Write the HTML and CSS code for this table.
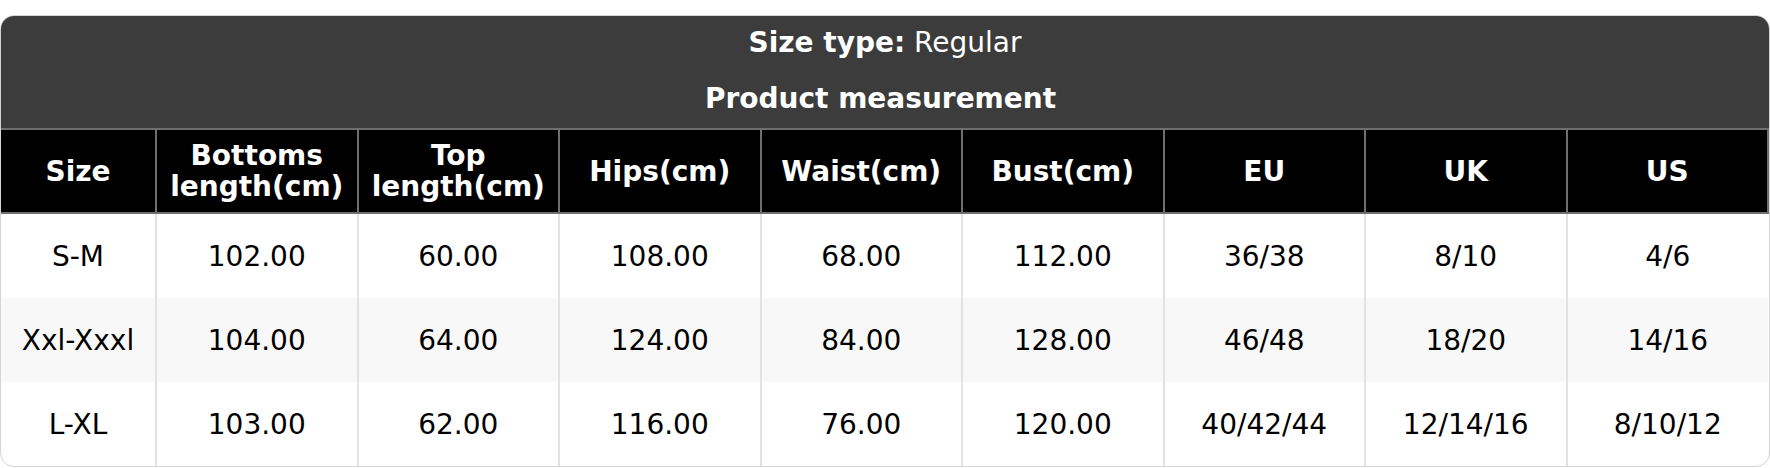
FILE: index.html
```html
<!DOCTYPE html>
<html>
<head>
<meta charset="utf-8">
<link rel="stylesheet" href="styles.css">
</head>
<body>
<div class="card">
  <div class="title">
    <div class="title-line first"><b>Size type:</b> Regular</div>
    <div class="title-line second"><b>Product measurement</b></div>
  </div>
  <table class="chart">
    <colgroup>
      <col class="c-size">
      <col><col><col><col><col><col><col><col>
    </colgroup>
    <thead>
      <tr>
        <th>Size</th>
        <th>Bottoms<br>length(cm)</th>
        <th>Top<br>length(cm)</th>
        <th>Hips(cm)</th>
        <th>Waist(cm)</th>
        <th>Bust(cm)</th>
        <th>EU</th>
        <th>UK</th>
        <th>US</th>
      </tr>
    </thead>
    <tbody>
      <tr>
        <td>S-M</td><td>102.00</td><td>60.00</td><td>108.00</td><td>68.00</td><td>112.00</td><td>36/38</td><td>8/10</td><td>4/6</td>
      </tr>
      <tr class="alt">
        <td>Xxl-Xxxl</td><td>104.00</td><td>64.00</td><td>124.00</td><td>84.00</td><td>128.00</td><td>46/48</td><td>18/20</td><td>14/16</td>
      </tr>
      <tr>
        <td>L-XL</td><td>103.00</td><td>62.00</td><td>116.00</td><td>76.00</td><td>120.00</td><td>40/42/44</td><td>12/14/16</td><td>8/10/12</td>
      </tr>
    </tbody>
  </table>
</div>
</body>
</html>
```

FILE: styles.css
```css
html, body {
  margin: 0;
  padding: 0;
  background: #ffffff;
}
body {
  padding-top: 15px;
  font-family: "DejaVu Sans", Verdana, sans-serif;
  font-size: 28px;
  color: #000;
}
.card {
  width: 1770px;
  box-sizing: border-box;
  border: 1px solid #d4d4d4;
  border-radius: 14px;
  overflow: hidden;
  background: #fff;
}
.title {
  background: #3c3c3c;
  color: #fff;
  text-align: center;
}
.title-line {
  line-height: 32px;
}
.title-line.first {
  padding: 11px 0 12px;
}
.title-line.second {
  padding: 12px 9px 13px 0;
}
.title-line b {
  font-weight: bold;
}
.chart {
  width: 100%;
  border-collapse: collapse;
  table-layout: fixed;
}
.c-size {
  width: 155px;
}
.chart th {
  background: #000;
  color: #fff;
  font-weight: bold;
  border: 2px solid #6f6f6f;
  height: 84px;
  box-sizing: border-box;
  padding: 0 4px;
  line-height: 31px;
  text-align: center;
}
.chart th:first-child { border-left: none; }
.chart td {
  height: 84px;
  padding: 0 4px;
  text-align: center;
  border-left: 2px solid #e2e2e2;
  border-right: 2px solid #e2e2e2;
  color: #000;
}
.chart td:first-child { border-left: none; }
.chart td:last-child { border-right: none; }
.chart tr.alt td {
  background: #f8f8f8;
}
```
